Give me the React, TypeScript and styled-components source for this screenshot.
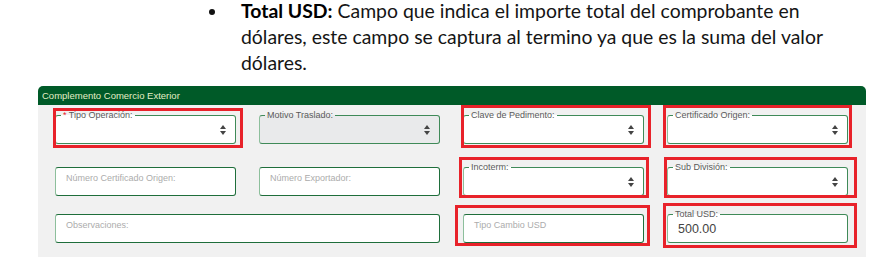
import styled, { createGlobalStyle } from "styled-components";

const GlobalStyle = createGlobalStyle`
  body {
    margin: 0;
    background: #ffffff;
    font-family: "Liberation Sans", Arial, sans-serif;
  }
`;

const Page = styled.div`
  width: 885px;
  height: 271px;
  overflow: hidden;
`;

const Note = styled.div`
  display: flex;
  align-items: flex-start;
  padding-left: 209px;
  margin-top: -2px;
  height: 88px;
`;

const Bullet = styled.div`
  width: 6px;
  height: 6px;
  border-radius: 50%;
  background: #111;
  margin-top: 11px;
  flex-shrink: 0;
`;

const NoteText = styled.p`
  margin: 0 0 0 26px;
  font-family: Lato, "Liberation Sans", sans-serif;
  font-size: 19.4px;
  line-height: 26px;
  color: #151515;
  white-space: nowrap;

  b {
    font-weight: 700;
    color: #000;
  }
`;

const Panel = styled.section`
  margin-left: 38px;
  width: 828px;
`;

const PanelHeader = styled.div`
  height: 19px;
  background: #005a28;
  border-radius: 5px 5px 0 0;
  display: flex;
  align-items: center;
  padding-left: 4px;
  font-size: 9.5px;
  color: #e3eec6;
`;

const PanelBody = styled.div`
  background: #f1f1f1;
  height: 152px;
  box-sizing: border-box;
  padding: 5px 18px 14px 17px;
  display: grid;
  grid-template-columns: repeat(4, 181px);
  grid-template-rows: 34px 52px 47px;
  column-gap: 23px;
  align-items: end;
`;

const Cell = styled.div<{ $span?: number; $mark?: string }>`
  position: relative;
  grid-column: span ${(p) => p.$span ?? 1};

  ${(p) =>
    p.$mark &&
    `
    &::after {
      content: "";
      position: absolute;
      inset: ${p.$mark};
      border: 3px solid #e8222a;
      pointer-events: none;
    }
  `}
`;

const Fieldset = styled.fieldset<{ $disabled?: boolean }>`
  margin: 0;
  padding: 0 9px 0 10px;
  min-width: 0;
  height: 34px;
  box-sizing: border-box;
  border: 1px solid #3f8a58;
  border-left-color: #8dbf9c;
  border-radius: 3px;
  background: ${(p) => (p.$disabled ? "#e9eaeb" : "#ffffff")};
`;

const Legend = styled.legend`
  margin-left: -5px;
  padding: 0 2px;
  font-size: 9px;
  line-height: 10px;
  color: #5a5a5a;

  span {
    color: #e8222a;
  }
`;

const Control = styled.div`
  height: 100%;
  box-sizing: border-box;
  padding-bottom: 4px;
  display: flex;
  align-items: center;
  justify-content: space-between;
`;

const Value = styled.span`
  font-size: 12.5px;
  color: #444;
`;

const Input = styled.div`
  height: 29px;
  box-sizing: border-box;
  border: 1px solid #1f6e3b;
  border-left-color: #8dbf9c;
  border-radius: 3px;
  background: #ffffff;
  padding: 5px 10px 0;
  font-size: 9px;
  line-height: 11px;
  color: #acacac;
`;

const Arrows = () => (
  <svg width="6" height="10" viewBox="0 0 6 10">
    <path d="M0 4 L3 0 L6 4 Z M0 6 L3 10 L6 6 Z" fill="#444" />
  </svg>
);

type SelectProps = {
  label: string;
  required?: boolean;
  disabled?: boolean;
  mark?: string;
};

const SelectField = ({ label, required, disabled, mark }: SelectProps) => (
  <Cell $mark={mark}>
    <Fieldset $disabled={disabled}>
      <Legend>
        {required && <span>* </span>}
        {label}
      </Legend>
      <Control>
        <span />
        <Arrows />
      </Control>
    </Fieldset>
  </Cell>
);

export default function App() {
  return (
    <Page>
      <GlobalStyle />
      <Note>
        <Bullet />
        <NoteText>
          <b>Total USD:</b> Campo que indica el importe total del comprobante en
          <br />
          dólares, este campo se captura al termino ya que es la suma del valor
          <br />
          dólares.
        </NoteText>
      </Note>

      <Panel>
        <PanelHeader>Complemento Comercio Exterior</PanelHeader>
        <PanelBody>
          <SelectField label="Tipo Operación:" required mark="-2px -7px -4px -2px" />
          <SelectField label="Motivo Traslado:" disabled />
          <SelectField label="Clave de Pedimento:" mark="-5px -7px -4px -2px" />
          <SelectField label="Certificado Origen:" mark="-5px -4px -4px -4px" />

          <Cell>
            <Input>Número Certificado Origen:</Input>
          </Cell>
          <Cell>
            <Input>Número Exportador:</Input>
          </Cell>
          <SelectField label="Incoterm:" mark="-5px -5px -2px -4px" />
          <SelectField label="Sub División:" mark="-5px -9px -2px -3px" />

          <Cell $span={2}>
            <Input>Observaciones:</Input>
          </Cell>
          <Cell $mark="-9px -6px -3px -8px">
            <Input>Tipo Cambio USD</Input>
          </Cell>
          <Cell $mark="-6px -9px -5px -4px">
            <Fieldset>
              <Legend>Total USD:</Legend>
              <Control>
                <Value>500.00</Value>
              </Control>
            </Fieldset>
          </Cell>
        </PanelBody>
      </Panel>
    </Page>
  );
}
